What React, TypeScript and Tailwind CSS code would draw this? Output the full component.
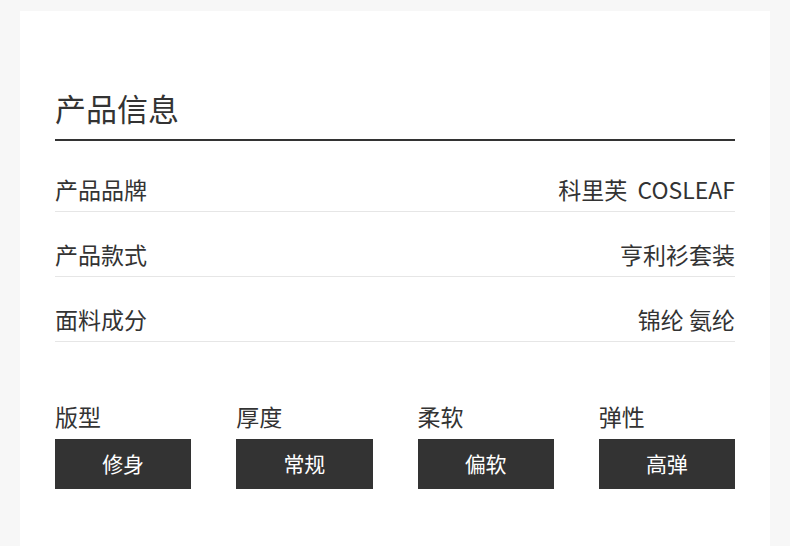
const FONT = "font-['Noto_Sans_CJK_SC','Noto_Sans',sans-serif]";

const specs = [
  { label: "产品品牌", value: "科里芙  COSLEAF" },
  { label: "产品款式", value: "亨利衫套装" },
  { label: "面料成分", value: "锦纶 氨纶" },
];

const traits = [
  { label: "版型", value: "修身" },
  { label: "厚度", value: "常规" },
  { label: "柔软", value: "偏软" },
  { label: "弹性", value: "高弹" },
];

export default function App() {
  return (
    <div className={`min-h-[546px] overflow-hidden bg-[#f7f7f7] px-[20px] pt-[11px] text-[#333] ${FONT}`}>
      <div className="h-[560px] bg-white px-[35px] pt-[77px]">
        {/* Heading */}
        <h1 className="border-b-2 border-[#333] pb-[11px] text-[31px] leading-[40px]">
          产品信息
        </h1>

        {/* Spec rows */}
        <div className="mt-[6px]">
          {specs.map((s) => (
            <div
              key={s.label}
              className="flex h-[65px] items-end justify-between border-b border-[#e6e6e6] pb-[7px] text-[23px] leading-[30px]"
            >
              <span>{s.label}</span>
              <span className="whitespace-pre">{s.value}</span>
            </div>
          ))}
        </div>

        {/* Trait tags */}
        <div className="mt-[59px] grid grid-cols-4 gap-x-[45px]">
          {traits.map((t) => (
            <div key={t.label}>
              <div className="text-[23px] leading-[30px]">{t.label}</div>
              <div className="mt-[8px] flex h-[50px] items-center justify-center bg-[#333] text-[21px] text-white">
                {t.value}
              </div>
            </div>
          ))}
        </div>
      </div>
    </div>
  );
}
